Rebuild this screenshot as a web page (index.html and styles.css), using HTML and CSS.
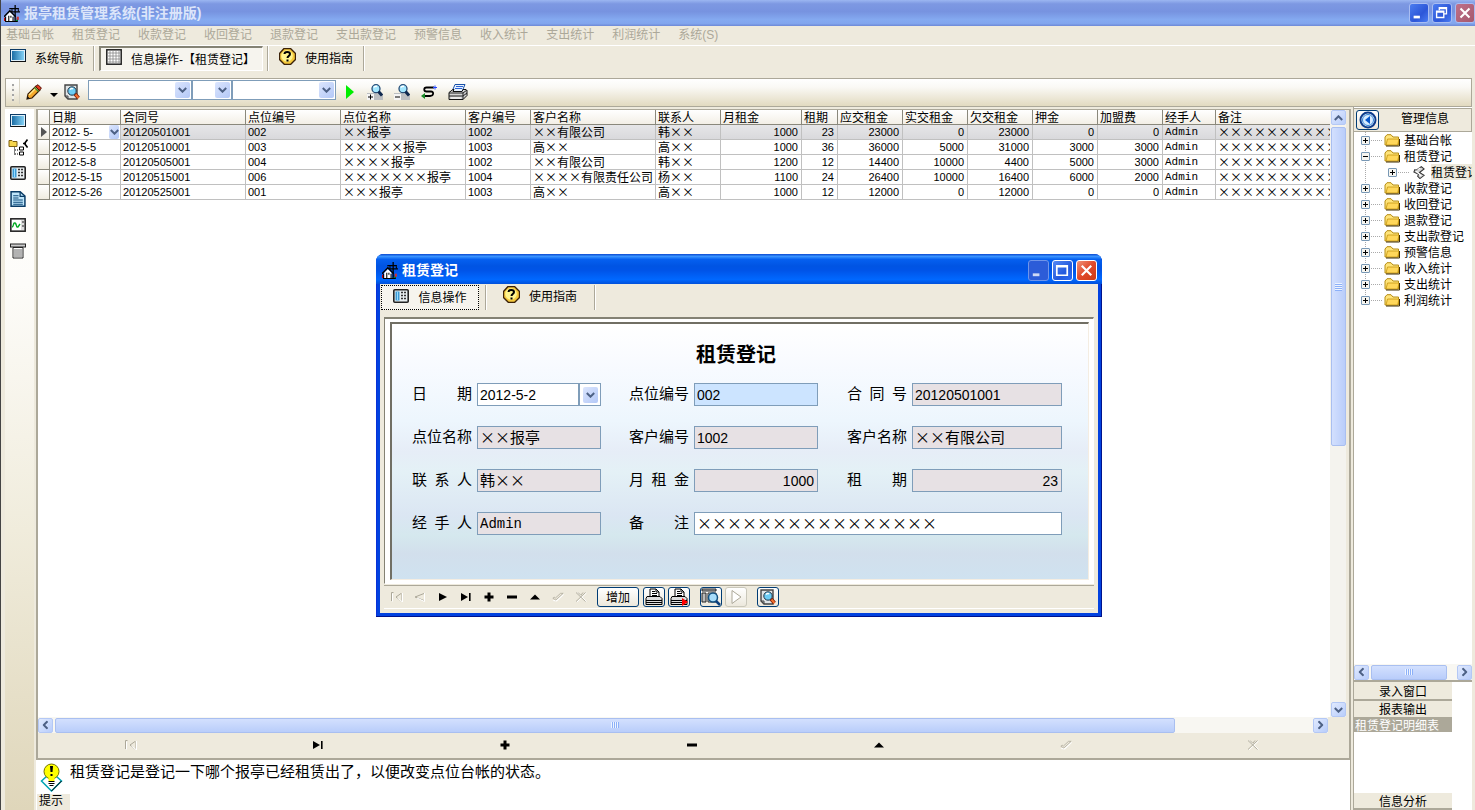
FILE: index.html
```html
<!DOCTYPE html>
<html lang="zh-CN">
<head>
<meta charset="utf-8">
<title>报亭租赁管理系统(非注册版)</title>
<link rel="stylesheet" href="styles.css">
</head>
<body>
<svg class="defs" aria-hidden="true">
  <symbol id="i-app" viewBox="0 0 16 16"><path d="M10.500 0v15M5 3.500h9M6 6.500h9" stroke="#000" stroke-width="1.200" fill="none"/><path d="M7 4h1v2H7zM13 4h1v2h-1z" fill="#000"/><path d="M2 10l3.500-3.500L9 10v5H2z" fill="#fff"/><path d="M0 11l5.500-5.500L11 11" fill="none" stroke="#000" stroke-width="1.300"/><path d="M1.500 11v4.500h11V12" stroke="#000" fill="none"/><path d="M0 12h1v3H0z" fill="#c00"/><path d="M4 10h1v5H4zM6 10h1v2H6zM8 11h1v4H8z" fill="#000"/><path d="M12 11h2v3h-2z" fill="#c33"/><path d="M11 14h2v1h-2z" fill="#083"/></symbol>
  <symbol id="i-screen" viewBox="0 0 16 14"><defs><linearGradient id="g-screen"><stop offset="0" stop-color="#1b6da5"/><stop offset="1" stop-color="#83d0f4"/></linearGradient></defs><rect x=".5" y=".5" width="15" height="12" fill="#dff0fa" stroke="#0b3a66"/><rect x="2" y="2" width="12" height="9" fill="url(#g-screen)"/><path d="M1 12.500h15V2" stroke="#111" fill="none"/></symbol>
  <symbol id="i-grid" viewBox="0 0 16 16"><rect x=".8" y=".8" width="14.400" height="14.400" fill="#fff" stroke="#222" stroke-width="1.500"/><path d="M4 1v14M7 1v14M10 1v14M13 1v14M1 4h14M1 7h14M1 10h14M1 13h14" stroke="#888" stroke-width=".8"/></symbol>
  <symbol id="i-help" viewBox="0 0 17 17"><path d="M5 .5h6.500l5 5v6l-5 5H5.500l-5-5v-6z" fill="#f6c93c" stroke="#3b2108" stroke-width="1.400"/><circle cx="8" cy="8" r="5.800" fill="#fff48e"/><path d="M5.500 6c0-2.800 5.500-2.800 5.500 0 0 2-2.500 2-2.500 4" fill="none" stroke="#000" stroke-width="2"/><path d="M7.500 11.500h2v2h-2z" fill="#000"/></symbol>
  <symbol id="i-card" viewBox="0 0 16 14"><rect x=".8" y=".8" width="14.400" height="12.400" rx="1" fill="#e8eef0" stroke="#222" stroke-width="1.600"/><rect x="2.500" y="2.500" width="4" height="9" fill="#3b9bd6"/><path d="M4.500 3v8" stroke="#9bdcff"/><path d="M8 3.500h2M11 3.500h2M8 6.500h2M11 6.500h2M8 9.500h2M11 9.500h2" stroke="#333" stroke-width="1.400"/></symbol>
  <symbol id="i-find" viewBox="0 0 16 16"><path d="M1 1h12v14H4l-3-3z" fill="#dfe4e6" stroke="#444" stroke-width="1.400"/><path d="M4 15v-3H1" fill="none" stroke="#444"/><circle cx="8" cy="7" r="4.200" fill="#6ccdf5" stroke="#234" stroke-width="1"/><path d="M6 5.500c1-1 2.500-1 3-.5" stroke="#fff" fill="none" stroke-width="1.300"/><path d="M11 10l3.500 4" stroke="#7a1c08" stroke-width="3.600"/><path d="M11.500 10.500l3 3.500" stroke="#f5702c" stroke-width="2"/></symbol>
  <symbol id="i-down" viewBox="0 0 9 6"><path d="M.8 1l3.700 3.700L8.200 1" fill="none" stroke="#4d6185" stroke-width="2"/></symbol>
  <symbol id="i-pencil" viewBox="0 0 16 16"><path d="M1 15l1-5 8-8 4 4-8 8z" fill="#f6a92b" stroke="#3a1d05" stroke-width="1.200"/><path d="M3 11l8-8" stroke="#ffe98a" stroke-width="1.300"/><path d="M9.500 2.500L12 .7l3.400 3.400-2 2.300z" fill="#e23818" stroke="#501008"/><path d="M8.500 3.500l4 4" stroke="#438c32" stroke-width="1.500"/><path d="M1 15l.5-3 2.300 2.400z" fill="#111"/></symbol>
  <symbol id="i-lens" viewBox="0 0 16 16"><path d="M0 9h14l2 2v5H0z" fill="#bbbec1"/><circle cx="9" cy="4.700" r="4" fill="#a3e7ff" stroke="#274d77" stroke-width="1.300"/><path d="M7 3.500c.5-1 2-1.500 3-1" stroke="#fff" fill="none" stroke-width="1.500"/><path d="M11.500 7.500l3.500 4" stroke="#10294f" stroke-width="3"/><rect x="0" y="10" width="7" height="6" fill="#f5f5f5"/></symbol>
  <symbol id="i-print" viewBox="0 0 20 17"><path d="M7 1h10l-3 7H4z" fill="#e8f3ff" stroke="#174fa5"/><path d="M8 3h7M7 5h7" stroke="#2c63d4"/><path d="M1 9l4-3h1l-1 2h9l1-2h3l1 1v5l-4 4H1z" fill="#d3d3d3" stroke="#111"/><path d="M1 9.500h14l4-3M1 12.500h14l4-3M15 9v7" stroke="#222" fill="none"/><path d="M3 14.500h10" stroke="#fff"/></symbol>
  <symbol id="i-doc" viewBox="0 0 15 15"><path d="M1 .7h8.500l4.500 4v9.600H1z" fill="#bfe6fb" stroke="#093b66" stroke-width="1.400"/><path d="M9.500 1v4H14" fill="none" stroke="#093b66" stroke-width="1.200"/><path d="M3 4.500h5M3 6.500h5M3 8.500h9M3 10.500h9M3 12.500h9" stroke="#104b7b"/></symbol>
  <symbol id="i-first" viewBox="0 0 12 10"><path d="M.5 9V.5h2M11 1v8.500M10 1.500L5 5l5 4" fill="none" stroke="#aca899"/><path d="M1.500 9.500v-8M11.500 1v9l-5-4" stroke="#fff" fill="none"/></symbol>
  <symbol id="i-prev" viewBox="0 0 12 10"><path d="M10 1.500L1 5l9 3.500" fill="none" stroke="#aca899"/><path d="M10.500 1v8.500L3 6" stroke="#fff" fill="none"/></symbol>
  <symbol id="i-next" viewBox="0 0 12 10"><path d="M2 1v8l8-4z" fill="#000"/></symbol>
  <symbol id="i-last" viewBox="0 0 12 10"><path d="M1 1v8l7-4zM9 1h1.600v8H9z" fill="#000"/></symbol>
  <symbol id="i-plus" viewBox="0 0 12 10"><path d="M1.500 3.500h3V.5h3v3h3v3h-3v3h-3v-3h-3z" fill="#000"/></symbol>
  <symbol id="i-minus" viewBox="0 0 12 10"><path d="M1 3.500h10v3H1z" fill="#000"/></symbol>
  <symbol id="i-up" viewBox="0 0 12 10"><path d="M1 7.500h10l-5-5z" fill="#000"/></symbol>
  <symbol id="i-check" viewBox="0 0 14 10"><path d="M1.500 9l4 .5L13.500 2" fill="none" stroke="#fff" stroke-width="1.200"/><path d="M1 6.500l3.500 2L13 .7H10l-6 5.500-1.500-1z" fill="none" stroke="#aca899" stroke-width=".9"/></symbol>
  <symbol id="i-x" viewBox="0 0 12 10"><path d="M2 .5l9.500 9M11.500 1L2 10" stroke="#fff"/><path d="M1 .5L10.500 9.500M10.500.5L1 9.500M3 .5l3 3M8 .5L6 3" stroke="#aca899" stroke-width=".9" fill="none"/></symbol>
  <symbol id="i-folder" viewBox="0 0 16 13"><path d="M1 11V3l2-2.300h4L9 3h5.500v8z" fill="#ffe47a" stroke="#b58c14"/><path d="M3.500 5H15l-1.300 6H2z" fill="#ffd75a" stroke="#c49410" stroke-width=".8"/><path d="M2 12h13.500V5" stroke="#3d2d05" fill="none"/></symbol>
  <symbol id="i-scroll" viewBox="0 0 15 14"><path d="M4.500 4.500L10 .8l3 2.400L8 7l5 3-4.500 3.500L6 11l1-2-5-2.500 1-2.500z" fill="#d5d5d5" stroke="#333" stroke-width="1.100"/><path d="M4 5l6 6M6 4l3-2" stroke="#fff" stroke-width="1.200"/></symbol>
  <symbol id="i-printer" viewBox="0 0 18 18"><path d="M5 8V1h6l3 3v4" fill="#fff" stroke="#000"/><path d="M7 3.500h3M7 5.500h5M7 7.500h5M11 1v3h3" stroke="#000" fill="none"/><path d="M2 8.500h13l2 2v6H1v-6z" fill="#ddd" stroke="#000"/><path d="M1 12.500h16M1 14.500h16" stroke="#000"/></symbol>
</svg>
<div class="app">
  <header class="titlebar">
    <svg class="appicon"><use href="#i-app"/></svg>
    <h1>报亭租赁管理系统(非注册版)</h1>
    <button class="wbtn" aria-label="最小化"><svg viewBox="0 0 20 20"><path d="M4 13h7v3H4z" fill="#fff"/></svg></button>
    <button class="wbtn" aria-label="还原"><svg viewBox="0 0 20 20"><path d="M7 7V4h8v7h-3M7 5h8" fill="none" stroke="#fff" stroke-width="1.500"/><path d="M4 8h8v7H4zM4 9h8" fill="none" stroke="#fff" stroke-width="1.500"/></svg></button>
    <button class="wbtn wclose" aria-label="关闭"><svg viewBox="0 0 20 20"><path d="M5 5l10 10M15 5L5 15" stroke="#fff" stroke-width="2.300"/></svg></button>
  </header>
  <nav class="menubar">
    <button disabled>基础台帐</button><button disabled>租赁登记</button><button disabled>收款登记</button><button disabled>收回登记</button><button disabled>退款登记</button><button disabled>支出款登记</button><button disabled>预警信息</button><button disabled>收入统计</button><button disabled>支出统计</button><button disabled>利润统计</button><button disabled>系统(S)</button>
  </nav>
  <nav class="tabs">
    <button class="tab tab-nav"><svg class="ic14"><use href="#i-screen"/></svg><span>系统导航</span></button><i class="sep"></i>
    <button class="tab tab-on"><svg class="ic16"><use href="#i-grid"/></svg><span>信息操作-【租赁登记】</span></button><i class="sep"></i>
    <button class="tab"><svg class="ic17"><use href="#i-help"/></svg><span>使用指南</span></button><i class="sep"></i>
  </nav>
  <div class="toolbar">
    <i class="grip"></i>
    <button class="tool pencil" aria-label="编辑"><svg class="ic16"><use href="#i-pencil"/></svg></button>
    <button class="tool caret" aria-label="更多"><svg viewBox="0 0 8 4"><path d="M0 0h8L4 4z"/></svg></button>
    <button class="tool find" aria-label="查找"><svg class="ic16"><use href="#i-find"/></svg></button>
    <span class="combo w-field"><select aria-label="字段"><option></option></select><span class="drop"><svg><use href="#i-down"/></svg></span></span>
    <span class="combo w-op"><select aria-label="条件"><option></option></select><span class="drop"><svg><use href="#i-down"/></svg></span></span>
    <span class="combo w-value"><select aria-label="值"><option></option></select><span class="drop"><svg><use href="#i-down"/></svg></span></span>
    <button class="tool run" aria-label="执行"><svg viewBox="0 0 8 14"><path d="M0 0l8 7-8 7z" fill="#0e0"/></svg></button>
    <button class="tool" aria-label="增加条件"><svg class="ic16" viewBox="0 0 16 16"><use href="#i-lens"/><path d="M1 13h5M3.500 10.500v5" stroke="#000"/></svg></button>
    <button class="tool" aria-label="减少条件"><svg class="ic16" viewBox="0 0 16 16"><use href="#i-lens"/><path d="M1 13h5" stroke="#000"/></svg></button>
    <button class="tool" aria-label="刷新"><svg class="ic16" viewBox="0 0 16 16"><path d="M13 3.500H5.500c-3 0-3 4 0 4H10c3 0 3 4.500-1 4.500H2" fill="none" stroke="#000" stroke-width="1.800"/><path d="M12 3.500h4M14 1.500v4" stroke="#24f" fill="none"/><path d="M4 9l-4 3 4 3z" fill="#178a25"/></svg></button>
    <button class="tool" aria-label="打印"><svg class="ic20"><use href="#i-print"/></svg></button>
  </div>
  <div class="body">
    <aside class="rail">
      <button aria-label="窗口"><svg class="ic14"><use href="#i-screen"/></svg></button>
      <button aria-label="结构"><svg class="ic20" viewBox="0 0 20 17"><path d="M1 2h3l1 1h4v5H1z" fill="#f5d54c" stroke="#7d5f10"/><path d="M6.500 9v7M7 11.500h4M7 15.500h4" stroke="#000" stroke-dasharray="1 1"/><path d="M11.500 8.500h4v3h-4zM11.500 13.500h4v3h-4z" fill="#fff" stroke="#000"/><path d="M19.500 1l-3 4 3 4M15 5h3" stroke="#000" stroke-width="1.600" fill="none"/></svg></button>
      <button aria-label="卡片"><svg class="ic14"><use href="#i-card"/></svg></button>
      <button aria-label="文档"><svg class="ic16"><use href="#i-doc"/></svg></button>
      <button aria-label="图表"><svg class="ic14" viewBox="0 0 16 14"><rect x=".8" y=".8" width="14.400" height="12.400" fill="#ddd" stroke="#222" stroke-width="1.500"/><path d="M2 2h9v10H2z" fill="#fff"/><path d="M2 9c2 0 1-5 3-4s1 5 3 4l2-3" stroke="#0a2" fill="none" stroke-width="1.400"/><path d="M13 3v2M13 7v2" stroke="#222"/></svg></button>
      <button aria-label="报表"><svg class="ic16" viewBox="0 0 16 15"><rect x=".5" y=".5" width="15" height="3" fill="#ccc" stroke="#222"/><path d="M3 4h10v10.500H3z" fill="#fff" stroke="#222"/><path d="M4 6.500h8M4 8.500h8M4 10.500h8M4 12.500h8" stroke="#666"/></svg></button>
    </aside>
    <div class="center">
      <div class="panel">
        <div class="gridwrap">
          <div class="gridbox">
            <table class="grid">
              <colgroup><col class="c12"><col class="c71"><col class="c125"><col class="c95"><col class="c125"><col class="c65"><col class="c125"><col class="c65"><col class="c81"><col class="c36"><col class="c65"><col class="c65"><col class="c65"><col class="c65"><col class="c65"><col class="c53"><col></colgroup>
              <thead><tr><th></th><th>日期</th><th>合同号</th><th>点位编号</th><th>点位名称</th><th>客户编号</th><th>客户名称</th><th>联系人</th><th>月租金</th><th>租期</th><th>应交租金</th><th>实交租金</th><th>欠交租金</th><th>押金</th><th>加盟费</th><th>经手人</th><th>备注</th></tr></thead>
              <tbody>
                <tr class="current"><td class="mark"><svg viewBox="0 0 6 10"><path d="M0 0l6 5-6 5z" fill="#555"/></svg></td><td class="edit"><div><span>2012- 5-</span><button class="drop" aria-label="选择日期"><svg><use href="#i-down"/></svg></button></div></td><td>20120501001</td><td>002</td><td class="zh">××报亭</td><td>1002</td><td class="zh">××有限公司</td><td class="zh">韩××</td><td class="n">1000</td><td class="n">23</td><td class="n">23000</td><td class="n">0</td><td class="n">23000</td><td class="n">0</td><td class="n">0</td><td class="m">Admin</td><td class="zh rem">××××××××××××</td></tr>
                <tr><td class="mark"></td><td>2012-5-5</td><td>20120510001</td><td>003</td><td class="zh">×××××报亭</td><td>1003</td><td class="zh">高××</td><td class="zh">高××</td><td class="n">1000</td><td class="n">36</td><td class="n">36000</td><td class="n">5000</td><td class="n">31000</td><td class="n">3000</td><td class="n">3000</td><td class="m">Admin</td><td class="zh rem">××××××××××××</td></tr>
                <tr><td class="mark"></td><td>2012-5-8</td><td>20120505001</td><td>004</td><td class="zh">××××报亭</td><td>1002</td><td class="zh">××有限公司</td><td class="zh">韩××</td><td class="n">1200</td><td class="n">12</td><td class="n">14400</td><td class="n">10000</td><td class="n">4400</td><td class="n">5000</td><td class="n">3000</td><td class="m">Admin</td><td class="zh rem">××××××××××××</td></tr>
                <tr><td class="mark"></td><td>2012-5-15</td><td>20120515001</td><td>006</td><td class="zh">×××××××报亭</td><td>1004</td><td class="zh">××××有限责任公司</td><td class="zh">杨××</td><td class="n">1100</td><td class="n">24</td><td class="n">26400</td><td class="n">10000</td><td class="n">16400</td><td class="n">6000</td><td class="n">2000</td><td class="m">Admin</td><td class="zh rem">××××××××××××</td></tr>
                <tr><td class="mark"></td><td>2012-5-26</td><td>20120525001</td><td>001</td><td class="zh">×××报亭</td><td>1003</td><td class="zh">高××</td><td class="zh">高××</td><td class="n">1000</td><td class="n">12</td><td class="n">12000</td><td class="n">0</td><td class="n">12000</td><td class="n">0</td><td class="n">0</td><td class="m">Admin</td><td class="zh rem">××××××××××××</td></tr>
              </tbody>
            </table>
          </div>
          <div class="vscroll">
            <button class="sb" aria-label="向上"><svg class="r180"><use href="#i-down"/></svg></button>
            <div class="vtrack"><i class="vthumb"><b></b></i></div>
            <button class="sb" aria-label="向下"><svg><use href="#i-down"/></svg></button>
          </div>
        </div>
        <div class="hscroll">
          <button class="sb" aria-label="向左"><svg class="r90"><use href="#i-down"/></svg></button>
          <div class="htrack"><i class="hthumb"><b></b></i></div>
          <button class="sb" aria-label="向右"><svg class="r270"><use href="#i-down"/></svg></button>
        </div>
        <div class="navigator">
          <button aria-label="首条" disabled><svg><use href="#i-first"/></svg></button>
          <button aria-label="末条"><svg><use href="#i-last"/></svg></button>
          <button aria-label="新增"><svg><use href="#i-plus"/></svg></button>
          <button aria-label="删除"><svg><use href="#i-minus"/></svg></button>
          <button aria-label="修改"><svg><use href="#i-up"/></svg></button>
          <button aria-label="保存" disabled><svg><use href="#i-check"/></svg></button>
          <button aria-label="取消" disabled><svg><use href="#i-x"/></svg></button>
        </div>
      </div>
      <footer class="hint">
        <div class="hinticon">
          <svg viewBox="0 0 22 29"><path d="M11 9l10 9-10 10L1 18z" fill="#fff" stroke="#00a5b5" stroke-width="1.500"/><path d="M11 28l10-10" stroke="#000"/><circle cx="11" cy="8.500" r="7.500" fill="#ff0" stroke="#777400"/><path d="M8 15h6v3H8z" fill="#ff0"/><path d="M8 18.500h6M8 20.500h6M9 22.500h4" stroke="#000" stroke-width="1.200"/><path d="M9.500 3h3l-.5 6h-2zM10 11h2v2h-2z" fill="#000"/></svg>
          <span>提示</span>
        </div>
        <p>租赁登记是登记一下哪个报亭已经租赁出了，以便改变点位台帐的状态。</p>
      </footer>
    </div>
    <aside class="side">
      <div class="sidehead"><button class="back" aria-label="返回"><svg viewBox="0 0 18 18"><circle cx="9" cy="9" r="7.500" fill="#fff" stroke="#0d3c8c" stroke-width="2"/><circle cx="9" cy="9" r="5.500" fill="#d7ecff" stroke="#2d83d8"/><path d="M11 5v8L6 9z" fill="#0757c9"/></svg></button><h2>管理信息</h2></div>
      <ul class="tree">
        <li><i class="pm plus"></i><svg class="fold"><use href="#i-folder"/></svg><span>基础台帐</span></li>
        <li><i class="pm"></i><svg class="fold"><use href="#i-folder"/></svg><span>租赁登记</span></li>
        <li class="child"><i class="pm plus"></i><svg class="fold"><use href="#i-scroll"/></svg><span class="sel">租赁登记</span></li>
        <li><i class="pm plus"></i><svg class="fold"><use href="#i-folder"/></svg><span>收款登记</span></li>
        <li><i class="pm plus"></i><svg class="fold"><use href="#i-folder"/></svg><span>收回登记</span></li>
        <li><i class="pm plus"></i><svg class="fold"><use href="#i-folder"/></svg><span>退款登记</span></li>
        <li><i class="pm plus"></i><svg class="fold"><use href="#i-folder"/></svg><span>支出款登记</span></li>
        <li><i class="pm plus"></i><svg class="fold"><use href="#i-folder"/></svg><span>预警信息</span></li>
        <li><i class="pm plus"></i><svg class="fold"><use href="#i-folder"/></svg><span>收入统计</span></li>
        <li><i class="pm plus"></i><svg class="fold"><use href="#i-folder"/></svg><span>支出统计</span></li>
        <li><i class="pm plus"></i><svg class="fold"><use href="#i-folder"/></svg><span>利润统计</span></li>
      </ul>
      <div class="hscroll sidescroll">
        <button class="sb" aria-label="向左"><svg class="r90"><use href="#i-down"/></svg></button>
        <div class="htrack"><i class="hthumb"><b></b></i></div>
        <button class="sb" aria-label="向右"><svg class="r270"><use href="#i-down"/></svg></button>
      </div>
      <div class="groups">
        <button class="group">录入窗口</button>
        <button class="group second">报表输出</button>
        <a class="report" href="#">租赁登记明细表</a>
        <button class="group last">信息分析</button>
      </div>
    </aside>
  </div>

  <section class="dialog" role="dialog" aria-label="租赁登记">
    <header class="dtitle">
      <svg class="appicon"><use href="#i-app"/></svg><h2>租赁登记</h2>
      <button class="dbtn dim" aria-label="最小化"><svg viewBox="0 0 20 20"><path d="M4 13h7v3H4z" fill="#cfd9f5"/></svg></button>
      <button class="dbtn" aria-label="最大化"><svg viewBox="0 0 20 20"><path d="M4 5h11v10H4zM4 6h11" fill="none" stroke="#fff" stroke-width="1.800"/></svg></button>
      <button class="dbtn dclose" aria-label="关闭"><svg viewBox="0 0 20 20"><path d="M5 5l10 10M15 5L5 15" stroke="#fff" stroke-width="2.300"/></svg></button>
    </header>
    <div class="dbody">
      <nav class="dtabs">
        <button class="tab dtab-on"><svg class="ic14"><use href="#i-card"/></svg><span>信息操作</span></button><i class="sep"></i>
        <button class="tab dtab"><svg class="ic17"><use href="#i-help"/></svg><span>使用指南</span></button><i class="sep"></i>
      </nav>
      <div class="frame">
        <form class="form">
          <h3>租赁登记</h3>
          <div class="fields">
            <label for="f1">日期</label><span class="datebox"><input id="f1" class="live" value="2012-5-2"><button type="button" aria-label="选择日期"><span class="drop"><svg><use href="#i-down"/></svg></span></button></span>
            <label for="f2">点位编号</label><input id="f2" class="focus" value="002">
            <label for="f3">合同号</label><input id="f3" value="20120501001" readonly>
            <label for="f4">点位名称</label><input id="f4" class="cjk" value="××报亭" readonly>
            <label for="f5">客户编号</label><input id="f5" value="1002" readonly>
            <label for="f6">客户名称</label><input id="f6" class="cjk" value="××有限公司" readonly>
            <label for="f7">联系人</label><input id="f7" class="cjk" value="韩××" readonly>
            <label for="f8">月租金</label><input id="f8" class="num" value="1000" readonly>
            <label for="f9">租期</label><input id="f9" class="num" value="23" readonly>
            <label for="f10">经手人</label><input id="f10" class="mono" value="Admin" readonly>
            <label for="f11">备注</label><input id="f11" class="cjk live wide" value="××××××××××××××××">
          </div>
        </form>
      </div>
      <div class="dnav">
        <button class="nv" aria-label="首条" disabled><svg><use href="#i-first"/></svg></button>
        <button class="nv" aria-label="上条" disabled><svg><use href="#i-prev"/></svg></button>
        <button class="nv" aria-label="下条"><svg><use href="#i-next"/></svg></button>
        <button class="nv" aria-label="末条"><svg><use href="#i-last"/></svg></button>
        <button class="nv" aria-label="新增"><svg><use href="#i-plus"/></svg></button>
        <button class="nv" aria-label="删除"><svg><use href="#i-minus"/></svg></button>
        <button class="nv" aria-label="修改"><svg><use href="#i-up"/></svg></button>
        <button class="nv" aria-label="保存" disabled><svg><use href="#i-check"/></svg></button>
        <button class="nv" aria-label="取消" disabled><svg><use href="#i-x"/></svg></button>
        <button class="xp add">增加</button>
        <button class="xp" aria-label="打印"><svg class="ic18"><use href="#i-printer"/></svg></button>
        <button class="xp" aria-label="打印输出"><svg class="ic18" viewBox="0 0 18 18"><use href="#i-printer"/><path d="M12 10v8l6-4z" fill="#f00"/></svg></button>
        <button class="xp gapl" aria-label="浏览"><svg class="ic20" viewBox="0 0 20 18"><path d="M1 1h14v2H1zM1 5h4v9H1z" fill="#bbb" stroke="#222"/><path d="M7 5h8v9H7z" fill="#fff" stroke="#222"/><circle cx="12" cy="9.500" r="4.500" fill="#a8ddfa" stroke="#135180" stroke-width="1.500"/><path d="M15 13l4 4" stroke="#0b3f7c" stroke-width="2.500"/></svg></button>
        <button class="xp off" aria-label="执行" disabled><svg class="ic18" viewBox="0 0 18 18"><path d="M5 2.500v13l9-6.500z" fill="#fff" stroke="#aca899"/></svg></button>
        <button class="xp gapl" aria-label="查找"><svg class="ic16"><use href="#i-find"/></svg></button>
      </div>
    </div>
  </section>
</div>
</body>
</html>
```
FILE: styles.css
```css
* { box-sizing: border-box; }
:root {
  --face: #eeeadd;
  --shade: #aca899;
  --cjk: "Noto Sans CJK SC", sans-serif;
  --num: "Liberation Sans", "Noto Sans CJK SC", sans-serif;
}
body { margin: 0; font: 12px/16px var(--num); color: #000; background: #fff; }
h1, h2, h3, p, ul { margin: 0; padding: 0; font-weight: normal; list-style: none; }
button { margin: 0; padding: 0; border: 0; background: none; font: inherit; color: inherit; display: flex; align-items: center; justify-content: center; flex: none; }
svg { display: block; flex: none; }
i { display: block; flex: none; }
.defs { position: absolute; width: 0; height: 0; }
.ic14 { width: 16px; height: 14px; }
.ic16 { width: 16px; height: 16px; }
.ic17 { width: 17px; height: 17px; }
.ic18 { width: 18px; height: 18px; }
.ic20 { width: 20px; height: 18px; }

.app { position: relative; display: flex; flex-direction: column; height: 100vh; background: var(--face); border-left: 1px solid #444; overflow: hidden; }

.titlebar { display: flex; align-items: center; gap: 3px; height: 26px; flex: none; padding-left: 3px; background: linear-gradient(#9bb6f1, #7d98e2 15%, #7793e0 45%, #84a9f0 75%, #82a6ee 90%, #6d88d6); }
.titlebar h1 { flex: 1; font-size: 14px; font-weight: bold; color: #dce5fa; }
.appicon { width: 17px; height: 17px; }
.wbtn { width: 20px; height: 20px; border: 1px solid #a9bdf2; border-radius: 3px; background: linear-gradient(135deg, #4c7df0, #2c56d8 60%, #4a7cf2); }
.wbtn svg, .dbtn svg { width: 100%; height: 100%; }
.wclose { background: linear-gradient(135deg, #c0718b, #a4586c); }

.menubar { display: flex; gap: 18px; height: 20px; flex: none; padding-left: 5px; border-bottom: 1px solid #fff; }
.menubar button { color: var(--shade); height: 18px; }

.tabs { display: flex; height: 32px; flex: none; padding-left: 9px; }
.tab { height: 25px; gap: 9px; align-items: flex-start; padding: 2px 10px 0; }
.tab span { padding-top: 3px; white-space: nowrap; }
.tab-nav { padding-left: 0; padding-top: 3px; }
.tab-nav span { padding-top: 2px; }
.tab-on { margin: 0 4px; width: 164px; padding: 1px 2px 0 0; border: 1px solid #fff; border-top: 2px solid #848274; border-left: 2px solid #848274; background: #f6f4ee; }
.sep { width: 2px; height: 25px; border-left: 1px solid var(--shade); border-right: 1px solid #fff; }

.toolbar { display: flex; align-items: center; height: 29px; flex: none; margin: 0 3px 0 4px; padding-bottom: 2px; border: 1px solid var(--shade); background: linear-gradient(#fff, #faf9f5 30%, #e2dac0); }
.grip { width: 14px; align-self: stretch; border-right: 1px solid #d8d4c6; background: repeating-linear-gradient(#a5a5a5 0 2px, #f3f1ea 2px 5px) 6px 5px / 2px 17px no-repeat; }
.tool { margin-right: 11px; }
.pencil { margin: 0 8px 0 6px; }
.caret { width: 8px; margin: 6px 6px 0 0; }
.caret svg { width: 8px; height: 4px; }
.find { margin-right: 8px; }
.run { margin: 0 13px 0 10px; }
.run svg { width: 8px; height: 14px; }
.combo { display: grid; align-self: flex-start; height: 20px; margin-top: 1px; }
.combo > * { grid-area: 1 / 1; }
.combo select { appearance: none; width: 100%; height: 20px; padding: 0 20px 0 2px; border: 1px solid #7f9db9; background: #fff; font: inherit; }
.w-field { width: 104px; }
.w-op { width: 40px; }
.w-value { width: 104px; }
.drop { display: flex; align-items: center; justify-content: center; width: 15px; height: 16px; border-radius: 2px; background: linear-gradient(135deg, #dbe5fd, #b3c8f7); }
.drop svg, .sb svg { width: 9px; height: 6px; }
.combo .drop { justify-self: end; align-self: center; margin-right: 2px; pointer-events: none; }

.body { flex: 1; display: flex; min-height: 0; }
.rail { width: 29px; flex: none; display: flex; flex-direction: column; align-items: center; gap: 10px; margin: 2px 2px 0 4px; padding: 4px 4px 0 0; background: linear-gradient(#fff, #fdfcf9 25%, #f0ecdc 60%, #dfd6ba); }
.rail button { height: 16px; width: 20px; }

.center { flex: 1; min-width: 0; display: flex; flex-direction: column; }
.panel { flex: 1; min-height: 0; display: flex; flex-direction: column; margin-top: 2px; padding: 0 3px 2px 0; border: 2px solid var(--shade); border-top-width: 1px; }
.gridwrap { flex: 1; min-height: 0; display: flex; background: #fff; }
.gridbox { flex: 1; min-width: 0; overflow: hidden; }
.grid { width: 100%; table-layout: fixed; border-spacing: 0; font-size: 11px; line-height: 14px; }
.grid th { height: 15px; padding: 0 0 0 2px; font: 12px/14px var(--cjk); text-align: left; white-space: nowrap; border-right: 1px solid #8a887c; border-bottom: 1px solid #8a887c; background: linear-gradient(#fff, #f3efe6); }
.grid td { height: 15px; padding: 0 3px 0 2px; border-right: 1px solid #c0c0c0; border-bottom: 1px solid #c0c0c0; white-space: nowrap; }
.grid th:last-child, .grid td:last-child { border-right: 0; padding-right: 0; }
.grid .zh { font: 12px/14px var(--cjk); padding-right: 0; }
.grid .rem { overflow: hidden; }
.grid .m { font: 11px/14px "Liberation Mono", monospace; }
.grid .n { text-align: right; }
.grid .mark { padding: 0 0 0 3px; background: linear-gradient(#fff, #f0ece0); border-color: #8a887c; }
.mark svg { width: 6px; height: 10px; }
.current td { background: linear-gradient(#e6e6e8, #d9d9dc); }
.grid .edit { background: #fff; padding-right: 1px; }
.edit div { display: flex; justify-content: space-between; }
.edit .drop { width: 10px; height: 14px; }
.c12 { width: 12px; } .c36 { width: 36px; } .c53 { width: 53px; } .c65 { width: 65px; } .c71 { width: 71px; } .c81 { width: 81px; } .c95 { width: 95px; } .c125 { width: 125px; }

.sb { width: 15px; height: 15px; border-radius: 2px; border: 1px solid #b4c8f5; background: linear-gradient(135deg, #e1eafe, #b8cdfb); }
.r90 { transform: rotate(90deg); }
.r180 { transform: rotate(180deg); }
.r270 { transform: rotate(270deg); }
.vscroll { width: 16px; flex: none; display: flex; flex-direction: column; align-items: center; background: #f4f3ee; }
.vtrack { flex: 1; width: 15px; padding-top: 2px; }
.vthumb { height: 55.5%; border: 1px solid #a9bff0; border-radius: 2px; background: linear-gradient(90deg, #d3e0fe, #b9cdfa); display: flex; align-items: center; justify-content: center; }
.vthumb b { width: 7px; height: 8px; background: repeating-linear-gradient(#eef4fe 0 1px, #8cb0f8 1px 2px); }
.hscroll { display: flex; align-items: center; height: 16px; flex: none; background: #f8f7f2; }
.panel .hscroll { margin-right: 18px; }
.htrack { flex: 1; height: 15px; padding-left: 2px; }
.hthumb { width: 89%; height: 15px; border: 1px solid #a9bff0; border-radius: 2px; background: linear-gradient(#d3e0fe, #b9cdfa); display: flex; align-items: center; justify-content: center; }
.hthumb b { width: 8px; height: 6px; background: repeating-linear-gradient(90deg, #eef4fe 0 1px, #8cb0f8 1px 2px); }
.navigator { display: grid; grid-template-columns: repeat(7, 1fr); height: 23px; flex: none; }
.navigator svg, .nv svg { width: 12px; height: 10px; }

.hint { display: flex; height: 50px; flex: none; background: #fff; border-right: 1px solid var(--shade); }
.hinticon { width: 34px; flex: none; display: flex; flex-direction: column; padding: 3px 0 0 1px; }
.hinticon svg { width: 23px; height: 29px; margin-left: 3px; }
.hinticon span { flex: 1; padding-left: 2px; line-height: 15px; white-space: nowrap; background: var(--face); margin-top: 2px; }
.hint p { font: 15px/21px var(--cjk); }

.side { width: 122px; flex: none; display: flex; flex-direction: column; margin-left: 2px; padding-right: 3px; border-left: 1px solid var(--shade); background: linear-gradient(90deg, #fff calc(100% - 3px), var(--face) 0); }
.sidehead { display: flex; align-items: center; height: 24px; flex: none; margin-top: 1px; padding-left: 2px; gap: 22px; border: 1px solid var(--shade); border-left: 0; background: var(--face); }
.sidehead h2 { font-size: 12px; padding-bottom: 2px; white-space: nowrap; }
.back, .xp { border: 1px solid #003c74; border-radius: 3px; background: linear-gradient(#fff, #ece8dc); }
.back { width: 23px; height: 20px; }
.back svg { width: 18px; height: 18px; }
.tree { flex: 1; min-height: 0; overflow: hidden; font: 12px/16px var(--cjk); }
.tree li { display: flex; align-items: center; height: 16px; padding-left: 7px; white-space: nowrap; background: repeating-linear-gradient(#aaa 0 1px, #fff 1px 2px) 11px 0 / 1px 100% no-repeat; }
.tree li:last-child { background-size: 1px 8px; }
.pm { width: 9px; height: 9px; border: 1px solid #7898b5; border-radius: 1px; background: linear-gradient(#000, #000) center / 5px 1px no-repeat, #f6f5f0; }
.plus { background: linear-gradient(#000, #000) center / 5px 1px no-repeat, linear-gradient(#000, #000) center / 1px 5px no-repeat, #f6f5f0; }
.tree li::after { content: ""; order: 1; width: 12px; height: 1px; margin: 0 1px; background: repeating-linear-gradient(90deg, #aaa 0 1px, #fff 1px 2px); flex: none; }
.tree .fold { order: 2; width: 16px; height: 13px; }
.tree span { order: 3; margin-left: 4px; }
.tree .child { padding-left: 34px; }
.tree .child .sel { background: var(--face); flex: 1; }
.sidescroll .hthumb { width: 88%; }
.groups { height: 130px; flex: none; display: flex; flex-direction: column; align-items: flex-start; border-top: 2px solid var(--shade); font: 12px/16px var(--cjk); }
.group { width: 98px; height: 19px; background: var(--face); border-bottom: 2px solid var(--shade); }
.second { height: 16px; border-bottom: 0; }
.last { height: 17px; margin-top: auto; }
.report { width: 98px; height: 15px; line-height: 15px; padding-left: 1px; color: #fff; background: var(--shade); text-decoration: none; }

.dialog { position: absolute; left: 375px; top: 254px; width: 726px; display: flex; flex-direction: column; padding: 0 4px 4px; border-radius: 8px 8px 0 0; background: #0242e0; box-shadow: inset -1px -1px 0 #00138c, inset 1px 0 0 #0831d9; }
.dtitle { display: flex; align-items: center; gap: 3px; height: 30px; margin: 0 -4px; padding: 2px 5px 0 6px; border-radius: 7px 7px 0 0; background: linear-gradient(#0b49d0, #3a94ff 8%, #0560f0 18%, #0054e3 40%, #0054e8 55%, #0068ff 85%, #0050da); }
.dtitle h2 { flex: 1; font-size: 14px; font-weight: bold; color: #fff; }
.dbtn { width: 21px; height: 21px; border: 1px solid #fff; border-radius: 3px; background: linear-gradient(135deg, #5689f5, #2359dd 60%, #2c6bf5); }
.dim { border-color: #6f95ea; background: #2c5cd8; }
.dclose { background: linear-gradient(135deg, #f0947a, #e0492a 50%, #cf3b15); }
.dbody { background: var(--face); padding: 0 4px 4px; }
.dtabs { display: flex; height: 33px; margin: 0 -3px; padding-top: 1px; }
.dtab-on { width: 98px; margin-right: 6px; padding: 3px 0 0; border: 1px dotted #000; background: #f6f4ee; }
.dtab-on span { padding-top: 1px; }
.dtab { padding: 1px 17px 0 16px; }
.frame { padding: 3px 4px 3px 5px; border: 1px solid #fff; border-top: 2px solid #848274; border-left: 1px solid #848274; background: #fff; }
.form { padding: 19px 25px 44px 20px; border: 1px solid #f4ede2; border-top: 2px solid #716f64; border-left: 2px solid #716f64; background: linear-gradient(#fff, #f7faff 18%, #edf6fd 38%, #e6edf7 50%, #e4f1f6 58%, #dbe6f3 75%, #d5e8ee 83%, #d2dfec 90%, #cfe2f0); }
.form h3 { font: bold 20px/22px var(--cjk); text-align: center; padding-right: 3px; margin-bottom: 18px; }
.fields { display: grid; grid-template-columns: 60px 124px 83px 124px 84px 150px; column-gap: 5px; row-gap: 20px; }
.fields label { font: 15px/19px var(--cjk); text-align: justify; text-align-last: justify; white-space: nowrap; }
.fields label:nth-of-type(3n+2) { padding-left: 23px; }
.fields label:nth-of-type(3n) { padding-left: 24px; }
.fields input { width: 100%; min-width: 0; height: 23px; padding: 0 2px; border: 1px solid #7f9db9; background: #e7e1e4; font: 14px/18px var(--num); color: #000; outline: 0; }
.fields .cjk { font: 15px/19px var(--cjk); padding-bottom: 2px; }
.fields .mono { font: 14px/18px "Liberation Mono", monospace; }
.fields .num { text-align: right; padding-right: 3px; }
.fields .live { background: #fff; }
.fields .focus { background: #cce4ff; }
.fields .wide { grid-column: 4 / 7; }
.datebox { display: flex; }
.datebox input { flex: 1; }
.datebox button { width: 22px; height: 23px; border: 1px solid #7f9db9; background: #fff; }
.dnav { display: flex; align-items: center; gap: 2px; height: 24px; padding-left: 2px; margin-top: 1px; border-top: 1px solid var(--shade); border-bottom: 1px solid #fff; }
.nv { width: 21px; height: 20px; }
.xp { width: 22px; height: 20px; }
.dnav .xp { margin-right: 1px; }
.dnav .add { width: 42px; margin: 0 2px 0 4px; font-family: var(--cjk); }
.dnav .gapl { margin-left: 7px; }
.dnav .off { border-color: #c9c7ba; }
```
